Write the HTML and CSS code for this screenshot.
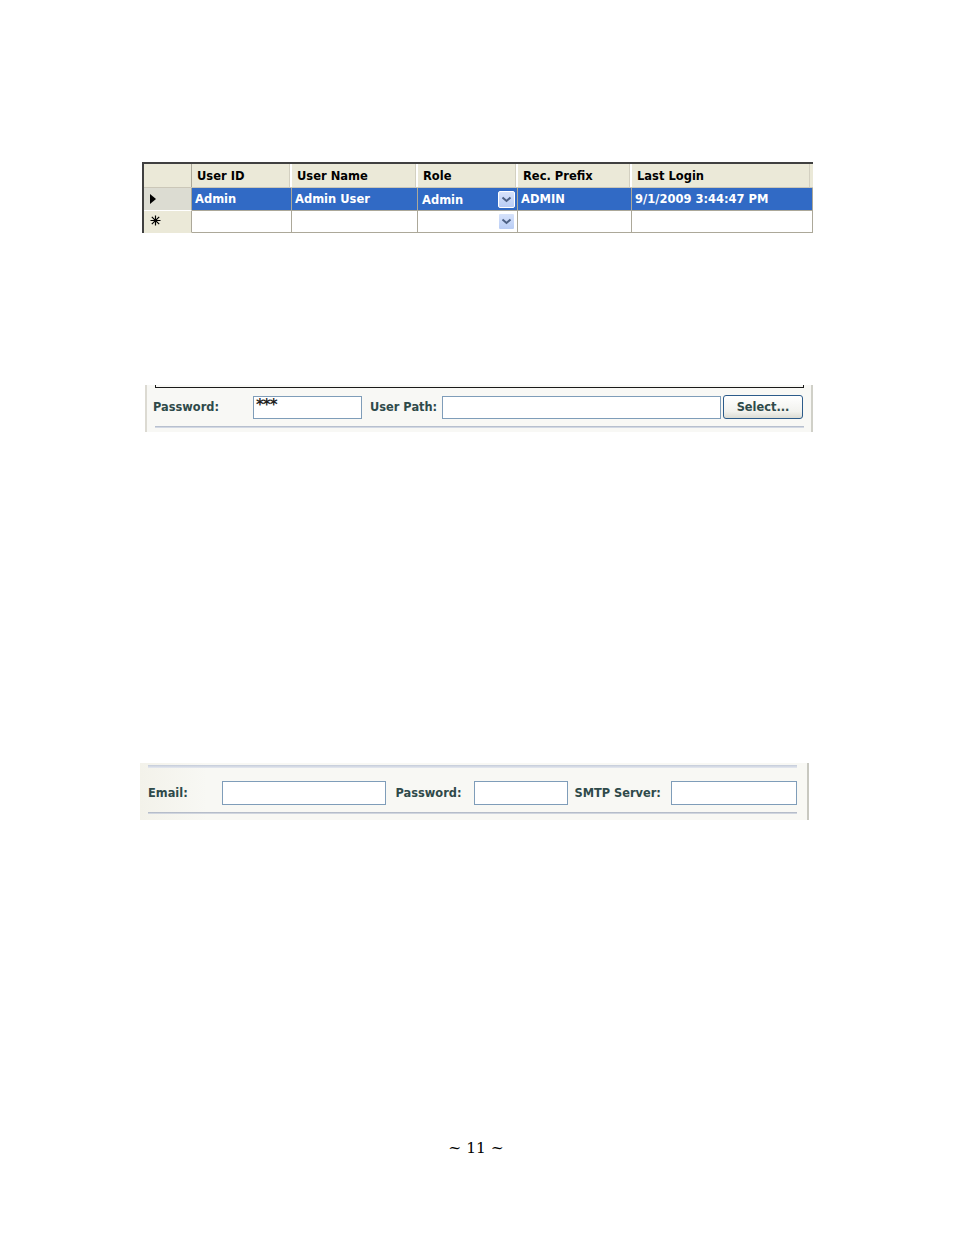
FILE: index.html
```html
<!DOCTYPE html>
<html>
<head>
<meta charset="utf-8">
<link rel="stylesheet" href="styles.css">
</head>
<body>
<div class="page">
  <div class="grid">
    <div class="hc corner"></div>
    <div class="hc">User ID</div>
    <div class="hc">User Name</div>
    <div class="hc">Role</div>
    <div class="hc">Rec. Prefix</div>
    <div class="hc last">Last Login</div>

    <div class="rh cur"><span class="tri"></span></div>
    <div class="c sel">Admin</div>
    <div class="c sel">Admin User</div>
    <div class="c sel combo"><span class="ctext">Admin</span><span class="dd"><svg width="11" height="7" viewBox="0 0 11 7"><path d="M1.5 1.5 L5.5 5 L9.5 1.5" fill="none" stroke="#4d6185" stroke-width="2"/></svg></span></div>
    <div class="c sel">ADMIN</div>
    <div class="c sel">9/1/2009 3:44:47 PM</div>

    <div class="rh new"><svg width="11" height="11" viewBox="0 0 11 11"><path d="M5.5 0.5 V10.5 M0.5 5.5 H10.5 M1.8 1.8 L9.2 9.2 M9.2 1.8 L1.8 9.2" stroke="#000" stroke-width="1.2" fill="none"/></svg></div>
    <div class="c"></div>
    <div class="c"></div>
    <div class="c combo"><span class="ctext"></span><span class="dd"><svg width="11" height="7" viewBox="0 0 11 7"><path d="M1.5 1.5 L5.5 5 L9.5 1.5" fill="none" stroke="#4d6185" stroke-width="2"/></svg></span></div>
    <div class="c"></div>
    <div class="c"></div>
  </div>

  <div class="panel1">
    <div class="boxend"></div>
    <div class="prow">
      <span class="lbl w-pass">Password:</span>
      <span class="inp i-pass">***</span>
      <span class="lbl w-path">User Path:</span>
      <span class="inp i-path"></span>
      <span class="btn">Select...</span>
    </div>
    <div class="sepline"></div>
  </div>

  <div class="panel2">
    <div class="topline"></div>
    <div class="erow">
      <span class="lbl w-email">Email:</span>
      <span class="inp i-email"></span>
      <span class="lbl w-pass2">Password:</span>
      <span class="inp i-pass2"></span>
      <span class="lbl w-smtp">SMTP Server:</span>
      <span class="inp i-smtp"></span>
    </div>
    <div class="botline"></div>
  </div>

  <div class="footer">~ 11 ~</div>
</div>
</body>
</html>
```

FILE: styles.css
```css
html, body {
  margin: 0;
  padding: 0;
  background: #ffffff;
}
.page {
  width: 954px;
  height: 1235px;
  display: flex;
  flex-direction: column;
  font-family: "DejaVu Sans", Verdana, sans-serif;
  font-weight: bold;
}

/* ---------- data grid ---------- */
.grid {
  margin: 162px 0 0 142px;
  width: 669px;
  display: grid;
  grid-template-columns: 48px 100px 126px 100px 114px 181px;
  grid-template-rows: 24px 23px 22px;
  border-top: 2px solid #404040;
  border-left: 2px solid #404040;
  font-size: 11.5px;
  color: #000;
}
.hc {
  background: #ebe9d8;
  border-bottom: 1px solid #cbc7b8;
  box-shadow: inset -2px 0 0 #ffffff, inset -3px 0 0 #d3d0c1;
  display: flex;
  align-items: center;
  padding-left: 5px;
  padding-top: 1px;
  box-sizing: border-box;
}
.hc.corner {
  box-shadow: inset -1px 0 0 #aca899;
}
.hc.last {
  box-shadow: inset -3px 0 0 #ebe9d8, inset -4px 0 0 #d3d0c1;
}
.rh {
  background: #ebe9d8;
  border-right: 1px solid #aca899;
  border-bottom: 1px solid #ffffff;
  box-sizing: border-box;
  display: flex;
  align-items: center;
  padding-left: 6px;
}
.rh.cur {
  background: #dcdcd2;
}
.tri {
  width: 0;
  height: 0;
  border-top: 5px solid transparent;
  border-bottom: 5px solid transparent;
  border-left: 6px solid #000;
}
.rh.new {
  padding-left: 6px;
  padding-bottom: 2px;
  border-bottom: 1px solid #ebe9d8;
}
.c {
  background: #ffffff;
  border-right: 1px solid #aca899;
  border-bottom: 1px solid #aca899;
  box-sizing: border-box;
  display: flex;
  align-items: center;
  padding-left: 3px;
}
.c.sel {
  background: #316ac5;
  color: #ffffff;
  border-bottom-color: #aca899;
}
.combo {
  justify-content: space-between;
  padding-left: 4px;
  padding-right: 2px;
}
.combo .ctext {
  padding-top: 2px;
}
.dd {
  width: 17px;
  height: 17px;
  box-sizing: border-box;
  background: linear-gradient(#d6e2fb, #b9cdf5);
  border: 1px solid #ffffff;
  border-radius: 2px;
  display: flex;
  align-items: center;
  justify-content: center;
}

/* ---------- shared form pieces ---------- */
.lbl {
  font-size: 11.4px;
  color: #2f4a4a;
  white-space: nowrap;
}
.inp {
  height: 23px;
  box-sizing: border-box;
  border: 1px solid #7f9db9;
  background: #ffffff;
  font-size: 15px;
  font-weight: bold;
  letter-spacing: -1px;
  color: #222;
  padding: 0 0 0 2px;
  line-height: 16px;
}

/* ---------- password / path panel ---------- */
.panel1 {
  margin: 152px 0 0 145px;
  width: 668px;
  height: 47px;
  box-sizing: border-box;
  border-left: 2px solid #dcdad2;
  border-right: 2px solid #d0d0c8;
  background: #f8f8f5;
  padding: 0 7px 0 8px;
  display: flex;
  flex-direction: column;
}
.boxend {
  height: 2px;
  border: 1px solid #1a1a1a;
  border-top: none;
}
.prow {
  display: flex;
  align-items: center;
  margin-top: 7px;
}
.w-pass { width: 100px; margin-left: -2px; }
.i-pass { width: 109px; }
.w-path { margin-left: 8px; width: 72px; }
.i-path { width: 279px; }
.btn {
  margin-left: 2px;
  width: 80px;
  height: 24px;
  box-sizing: border-box;
  border: 1px solid #2c5b8a;
  border-radius: 3px;
  background: linear-gradient(#ffffff, #f2f2ee 70%, #dcdcd4);
  font-size: 11.4px;
  color: #2f4a4a;
  display: flex;
  align-items: center;
  justify-content: center;
}
.sepline {
  margin-top: 7px;
  height: 2px;
  background: linear-gradient(#aab4c4, #dfe4ee);
}

/* ---------- email panel ---------- */
.panel2 {
  margin: 331px 0 0 140px;
  width: 669px;
  height: 57px;
  box-sizing: border-box;
  border-right: 2px solid #c8c8c0;
  background: linear-gradient(90deg, #f3f2ea, #f8f8f4 10%, #f8f8f4);
  padding: 2px 10px 0 8px;
  display: flex;
  flex-direction: column;
}
.topline {
  height: 3px;
  background: linear-gradient(#c3cbd9, #e6e9f0);
}
.erow {
  display: flex;
  align-items: center;
  margin-top: 13px;
}
.w-email { width: 74px; }
.i-email { width: 165px; height: 24px; }
.w-pass2 { margin-left: 10px; width: 79px; }
.i-pass2 { width: 95px; height: 24px; }
.w-smtp { margin-left: 6px; width: 97px; }
.i-smtp { width: 127px; height: 24px; }
.botline {
  margin-top: 7px;
  height: 2px;
  background: linear-gradient(#a8b0bf, #dde2ea);
}

/* ---------- footer ---------- */
.footer {
  margin-top: 319px;
  text-align: center;
  font-family: "DejaVu Serif", "Liberation Serif", serif;
  font-weight: normal;
  font-size: 15.5px;
  color: #000;
  padding-right: 2px;
}
```
